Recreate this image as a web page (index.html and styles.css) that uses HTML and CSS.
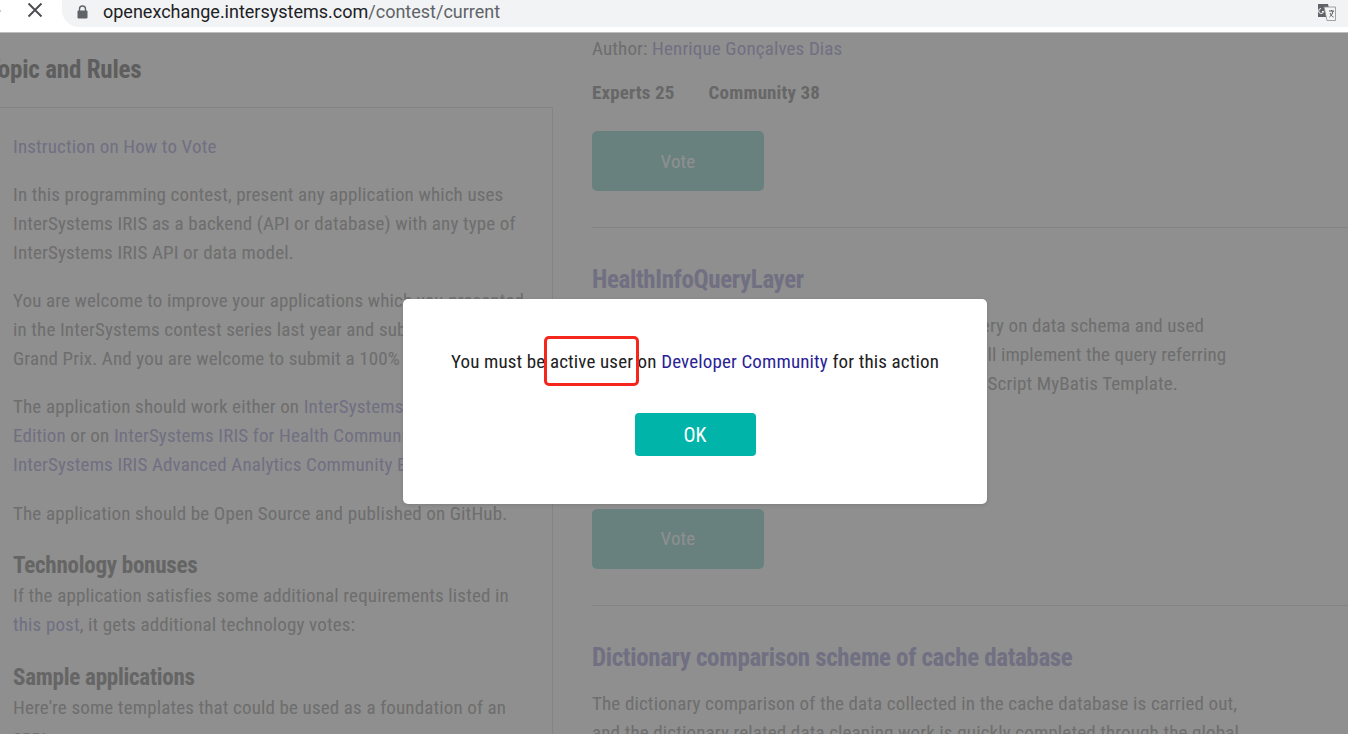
FILE: index.html
```html
<!DOCTYPE html>
<html lang="en">

<head>
	<meta charset="UTF-8">
	<meta name="viewport" content="width=device-width, initial-scale=1.0">
	<title>Contest</title>
	<link rel="stylesheet" href="styles.css">
</head>

<body>
	<div class="browser-bar">
		<svg class="forward-icon" width="10" height="16" viewBox="0 0 10 16"><path d="M0 3l5 5-5 5" fill="none" stroke="#c4c6c9" stroke-width="2"/></svg>
		<svg class="close-icon" width="16" height="16" viewBox="0 0 16 16"><path d="M1.5 1.5l13 13M14.5 1.5l-13 13" fill="none" stroke="#4a4c50" stroke-width="1.9"/></svg>
		<div class="address">
			<svg class="lock-icon" width="11" height="14" viewBox="0 0 11 14"><path d="M2.5 6V4a3 3 0 0 1 6 0v2" fill="none" stroke="#5f6368" stroke-width="1.4"/><rect x="0.5" y="5.5" width="10" height="8" rx="1" fill="#5f6368"/></svg>
			<span class="url"><b>openexchange.intersystems.com</b>/contest/current</span>
			<svg class="translate-icon" width="18" height="18" viewBox="0 0 18 18">
				<path d="M0 1h10l3 13H0z" fill="#5f6368"/>
				<path d="M6 4h11.500v13.500H9z" fill="#f4f4f4" stroke="#8a8c90" stroke-width=".8"/>
				<path d="M3 5.500a2.500 2.500 0 1 0 2.600 3H4" fill="none" stroke="#fff" stroke-width="1"/>
				<path d="M11 8h5M13.500 7v1M15 8c-.5 3-2 5-3.500 6M12 10c.8 2 2 3.500 3.500 4" fill="none" stroke="#55575b" stroke-width="1"/>
			</svg>
		</div>
	</div>

	<div class="page">
		<div class="rules">
			<h2 class="rules-title">Topic and Rules</h2>
			<div class="rules-box">
				<p><a href="#">Instruction on How to Vote</a></p>
				<p>In this programming contest, present any application which uses<br>InterSystems IRIS as a backend (API or database) with any type of<br>InterSystems IRIS API or data model.</p>
				<p>You are welcome to improve your applications which you presented<br>in the InterSystems contest series last year and submit them for the<br>Grand Prix. And you are welcome to submit a 100% new application.</p>
				<p>The application should work either on <a href="#">InterSystems IRIS Community<br>Edition</a> or on <a href="#">InterSystems IRIS for Health Community Edition</a> or<br><a href="#">InterSystems IRIS Advanced Analytics Community Edition</a>.</p>
				<p>The application should be Open Source and published on GitHub.</p>
				<h3>Technology bonuses</h3>
				<p>If the application satisfies some additional requirements listed in<br><a href="#">this post</a>, it gets additional technology votes:</p>
				<h3>Sample applications</h3>
				<p>Here're some templates that could be used as a foundation of an<br>app:</p>
			</div>
		</div>

		<div class="entries">
			<div class="entry first-entry">
				<p class="author">Author: <a href="#">Henrique Gonçalves Dias</a></p>
				<div class="votes"><b>Experts 25</b><b>Community 38</b></div>
				<button class="vote-btn">Vote</button>
			</div>
			<div class="entry">
				<h3 class="entry-title">HealthInfoQueryLayer</h3>
				<p class="summary">This project is built upon FHIR with focus on the query on data schema and used<br>the InterSystems IRIS for Health database as this will implement the query referring<br>to the templates for the official InterSystems ObjectScript MyBatis Template.</p>
				<p class="author">Author: <a href="#">Developer</a></p>
				<div class="votes"><b>Experts 12</b><b>Community 20</b></div>
				<button class="vote-btn">Vote</button>
			</div>
			<div class="entry">
				<h3 class="entry-title">Dictionary comparison scheme of cache database</h3>
				<p>The dictionary comparison of the data collected in the cache database is carried out,<br>and the dictionary related data cleaning work is quickly completed through the global</p>
			</div>
		</div>
	</div>

	<div class="overlay">
		<div class="modal">
			<p class="modal-text">You must be active user on <a href="#">Developer Community</a> for this action</p>
			<button class="ok-btn">OK</button>
			<div class="marker"></div>
		</div>
	</div>
</body>

</html>
```

FILE: styles.css
```css
body
{
	margin: 0;
	height: 734px;
	overflow: hidden;
	background-color: #ffffff;
	color: #c4c4c4;
	font-family: 'Roboto', 'Liberation Sans', sans-serif;
	font-stretch: 75%;
	font-size: 19px;
	line-height: 29px;
	letter-spacing: 0.14px;
}

a
{
	color: #cac7e8;
	text-decoration: none;
}

p
{
	margin: 0 0 19.250px;
}

/* browser chrome */

.browser-bar
{
	position: relative;
	z-index: 3;
	display: flex;
	height: 32px;
	align-items: flex-start;
	background-color: #ffffff;
	border-bottom: 1px solid #bdbdbd;
	letter-spacing: 0;
}

.forward-icon
{
	margin: 3px 0 0 -5px;
}

.close-icon
{
	margin: 2px 0 0 22px;
}

.address
{
	display: flex;
	align-items: center;
	flex: 1;
	height: 24px;
	margin-left: 19px;
	padding: 0 12px 3px 15px;
	background-color: #f1f3f4;
	border-radius: 0 0 0 17px;
}

.url
{
	margin-left: 15px;
	font-stretch: 100%;
	font-size: 18px;
	line-height: 22px;
	color: #5f6368;
}

.url b
{
	font-weight: 400;
	color: #202124;
}

.translate-icon
{
	margin-left: auto;
}

/* page under the overlay */

.page
{
	display: flex;
	height: 700px;
	overflow: hidden;
	padding-top: 1px;
}

.rules
{
	flex: none;
	width: 566px;
	margin-left: -13px;
}

.rules-title
{
	margin: 19px 0 21px;
	height: 33px;
	font-size: 25px;
	line-height: 33px;
	font-weight: 700;
	letter-spacing: -0.2px;
	color: #a8a8a8;
}

.rules-box
{
	padding: 23.600px 0 0 26px;
	border-top: 1px solid #ececec;
	border-right: 1px solid #ececec;
	height: 620px;
}

.rules-box h3
{
	margin: 0 0 -1.500px;
	padding-top: 2px;
	font-size: 23px;
	line-height: 34px;
	font-weight: 700;
	letter-spacing: -0.25px;
	color: #b4b4b4;
}

.entries
{
	flex: 1;
	margin-left: 39px;
}

.entry
{
	padding: 35px 0 36px;
	border-bottom: 1px solid #ececec;
}

.first-entry
{
	margin-top: -0.400px;
	padding-top: 0;
}

.votes
{
	display: flex;
	gap: 34px;
	margin-bottom: 24.400px;
	color: #b8b8b8;
}

.author
{
	margin-bottom: 15px;
}

.summary
{
	margin-bottom: 14px;
}

.entry-title
{
	margin: 0 0 14.600px;
	font-size: 25px;
	line-height: 33px;
	font-weight: 700;
	letter-spacing: -0.35px;
	color: #cac7e8;
}

.vote-btn
{
	display: block;
	width: 172px;
	height: 60px;
	padding: 0;
	border: none;
	border-radius: 5px;
	background-color: #b9e6e3;
	color: #ffffff;
	font: inherit;
	letter-spacing: inherit;
}

/* dialog */

.overlay
{
	position: absolute;
	top: 33px;
	left: 0;
	right: 0;
	bottom: 0;
	z-index: 2;
	background-color: rgba(0, 0, 0, 0.44);
}

.modal
{
	position: absolute;
	top: 266px;
	left: 403px;
	box-sizing: border-box;
	width: 584px;
	height: 205px;
	padding-top: 48px;
	text-align: center;
	background-color: #ffffff;
	border-radius: 5px;
	box-shadow: 0 1px 4px rgba(0, 0, 0, 0.12);
}

.modal-text
{
	margin: 0 0 37px;
	color: #212121;
}

.modal-text a
{
	color: #2a1f96;
}

.ok-btn
{
	width: 121px;
	height: 43px;
	padding: 1px 0 0;
	border: none;
	border-radius: 4px;
	background-color: #00b4aa;
	color: #ffffff;
	font: inherit;
	font-size: 20px;
	letter-spacing: inherit;
}

.marker
{
	position: absolute;
	top: 37px;
	left: 141px;
	box-sizing: border-box;
	width: 95px;
	height: 50px;
	border: 3.500px solid #f5261b;
	border-radius: 5px;
}
```
